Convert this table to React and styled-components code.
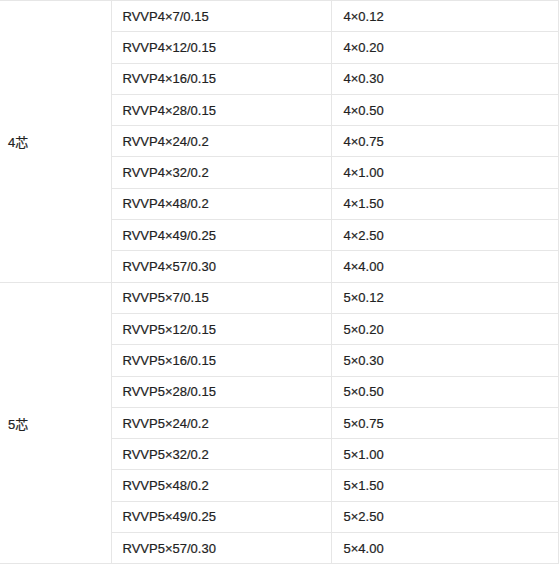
import React from "react"
import styled, { createGlobalStyle } from "styled-components"

const GlobalStyle = createGlobalStyle`
  html, body {
    margin: 0;
    padding: 0;
    background: #fff;
  }
  body {
    font-family: "Liberation Sans", Arial, "Noto Sans CJK SC", sans-serif;
  }
`

const SpecTable = styled.table`
  border-collapse: collapse;
  width: 558px;
  table-layout: fixed;
  font-size: 13px;
  color: #222;
`

const Col = styled.col`
  width: ${(p) => p.$w}px;
`

const Row = styled.tr`
  height: 31.3px;
`

const Cell = styled.td`
  border: 1px solid #e6e6e6;
  padding: 0 0 0 ${(p) => p.$pad || 11}px;
  vertical-align: middle;
  white-space: nowrap;
  -webkit-text-stroke: 0.2px #222;
  ${(p) => p.$first && "border-left: none;"}
`

const rows = [
  ["7/0.15", "0.12"],
  ["12/0.15", "0.20"],
  ["16/0.15", "0.30"],
  ["28/0.15", "0.50"],
  ["24/0.2", "0.75"],
  ["32/0.2", "1.00"],
  ["48/0.2", "1.50"],
  ["49/0.25", "2.50"],
  ["57/0.30", "4.00"],
]

const groups = [
  { label: "4芯", n: 4, rows },
  { label: "5芯", n: 5, rows },
]

export default function App() {
  return (
    <>
      <GlobalStyle />
      <SpecTable>
        <colgroup>
          <Col $w={111} />
          <Col $w={220} />
          <Col $w={227} />
        </colgroup>
        <tbody>
          {groups.map((g) =>
            g.rows.map((r, i) => (
              <Row key={g.label + i}>
                {i === 0 && (
                  <Cell $first $pad={8} rowSpan={g.rows.length}>
                    {g.label}
                  </Cell>
                )}
                <Cell>{`RVVP${g.n}×${r[0]}`}</Cell>
                <Cell $pad={12}>{`${g.n}×${r[1]}`}</Cell>
              </Row>
            ))
          )}
        </tbody>
      </SpecTable>
    </>
  )
}
